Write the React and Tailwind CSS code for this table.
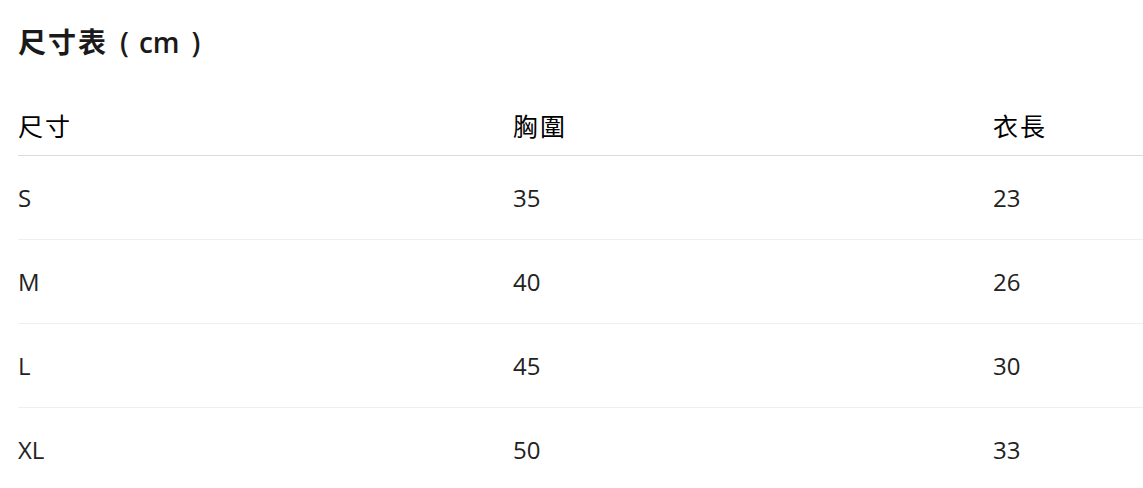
export default function App() {
  const rows = [
    ["S", "35", "23"],
    ["M", "40", "26"],
    ["L", "45", "30"],
    ["XL", "50", "33"],
  ];
  return (
    <div
      className="w-[1143px] h-[488px] overflow-hidden bg-white text-[#1a1a1a]"
      style={{ fontFamily: '"Open Sans", "Noto Sans CJK TC", sans-serif' }}
    >
      <div className="pl-[18px]">
        <h1 className="h-[84px] flex items-center text-[28px] font-semibold">
          <span className="tracking-[2px]">尺寸表</span>
          <span className="ml-[12px]">(</span>
          <span className="ml-[10px]">cm</span>
          <span className="ml-[12px]">)</span>
        </h1>
        <div className="grid grid-cols-[495px_480px_1fr] h-[72px] pt-[14px] items-center border-b border-[#dcdcdc] text-[25px] font-normal tracking-[2px] text-[#000]">
          <div>尺寸</div>
          <div>胸圍</div>
          <div>衣長</div>
        </div>
        {rows.map((r, i) => (
          <div
            key={i}
            className={
              "grid grid-cols-[495px_480px_1fr] h-[84px] items-center text-[24px] text-[#222] " +
              (i < rows.length - 1 ? "border-b border-[#efefef]" : "")
            }
          >
            <div>{r[0]}</div>
            <div>{r[1]}</div>
            <div>{r[2]}</div>
          </div>
        ))}
      </div>
    </div>
  );
}
